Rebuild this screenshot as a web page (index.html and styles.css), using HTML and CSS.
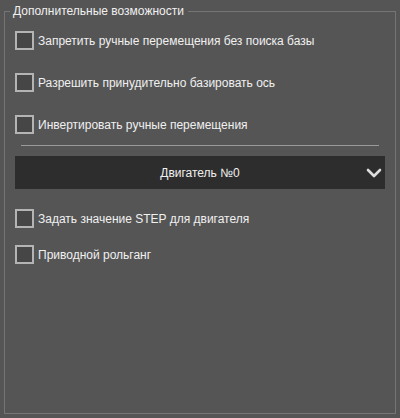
FILE: index.html
```html
<!DOCTYPE html>
<html>
<head>
<meta charset="utf-8">
<link rel="stylesheet" href="styles.css">
</head>
<body>
<fieldset class="panel">
  <legend class="legend">Дополнительные возможности</legend>
  <label class="row"><span class="box"></span><span class="label">Запретить ручные перемещения без поиска базы</span></label>
  <label class="row"><span class="box"></span><span class="label">Разрешить принудительно базировать ось</span></label>
  <label class="row"><span class="box"></span><span class="label">Инвертировать ручные перемещения</span></label>
  <div class="divider"></div>
  <div class="select">
    <span class="select-text">Двигатель №0</span>
    <svg class="chev" width="16" height="10" viewBox="0 0 16 10"><path d="M2 2 L8 8 L14 2" fill="none" stroke="#ddd" stroke-width="2.6" stroke-linecap="round" stroke-linejoin="round"/></svg>
  </div>
  <label class="row row-b"><span class="box"></span><span class="label">Задать значение STEP для двигателя</span></label>
  <label class="row"><span class="box"></span><span class="label">Приводной рольганг</span></label>
</fieldset>
</body>
</html>
```
FILE: styles.css
```css
html, body {
  margin: 0;
  padding: 0;
  background: #555555;
  width: 400px;
  height: 418px;
  overflow: hidden;
  font-family: "Liberation Sans", Arial, sans-serif;
  font-size: 12px;
  color: #f0f0f0;
}
.panel {
  box-sizing: border-box;
  margin: 4px 4px 0 4px;
  width: 392px;
  height: 410px;
  border: 1px solid #757575;
  padding: 13px 10px 0 10px;
  display: flex;
  flex-direction: column;
}
.legend {
  padding: 0 4px 0 3px;
  margin-left: -5px;
  color: #f0f0f0;
}
.row {
  display: flex;
  align-items: center;
  gap: 4px;
  height: 19px;
  margin-bottom: 23px;
}
.box {
  box-sizing: border-box;
  width: 19px;
  height: 19px;
  border: 2px solid #b4b4b4;
  background: #464646;
  flex: none;
}
.divider {
  height: 1px;
  background: #9a9a9a;
  margin: -12px 6px 10px 6px;
}
.select {
  height: 33px;
  background: #2d2d2d;
  display: flex;
  align-items: center;
  justify-content: center;
  position: relative;
  margin-bottom: 20px;
}
.select-text {
  color: #f0f0f0;
}
.chev {
  position: absolute;
  right: 3px;
  top: 12px;
}
.row-b {
  margin-bottom: 17px;
}
```
